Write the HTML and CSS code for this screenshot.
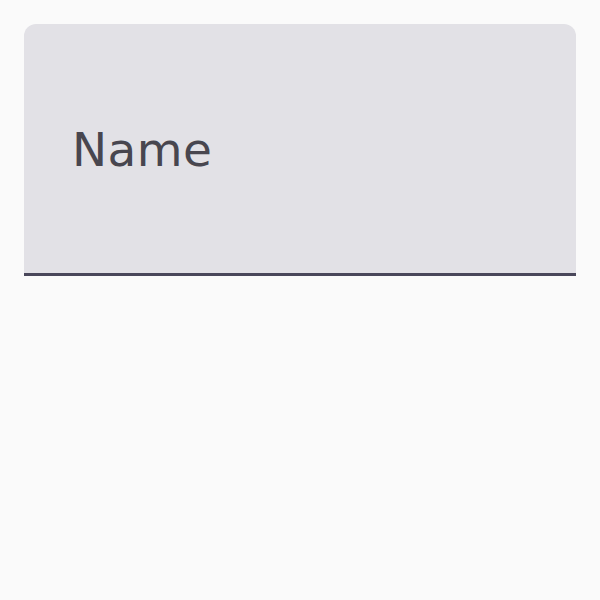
FILE: index.html
```html
<!DOCTYPE html>
<html lang="en">
<head>
  <meta charset="UTF-8">
  <title>Text field</title>
  <link rel="stylesheet" href="styles.css">
</head>
<body>
  <div class="field">
    <label class="field-label" for="name">Name</label>
    <input id="name" class="field-input" type="text">
  </div>
</body>
</html>
```

FILE: styles.css
```css
* {
  margin: 0;
  padding: 0;
  box-sizing: border-box;
}

body {
  background: #fafafa;
  font-family: "DejaVu Sans", sans-serif;
  padding: 24px;
}

.field {
  display: flex;
  align-items: center;
  height: 252px;
  padding: 0 48px 0 48px;
  background: #e2e1e6;
  border-radius: 12px 12px 0 0;
  border-bottom: 3px solid #49475a;
}

.field-label {
  font-size: 47px;
  letter-spacing: 0.45px;
  color: #48464f;
  margin-top: 2px;
}

.field-input {
  display: none;
}
```
